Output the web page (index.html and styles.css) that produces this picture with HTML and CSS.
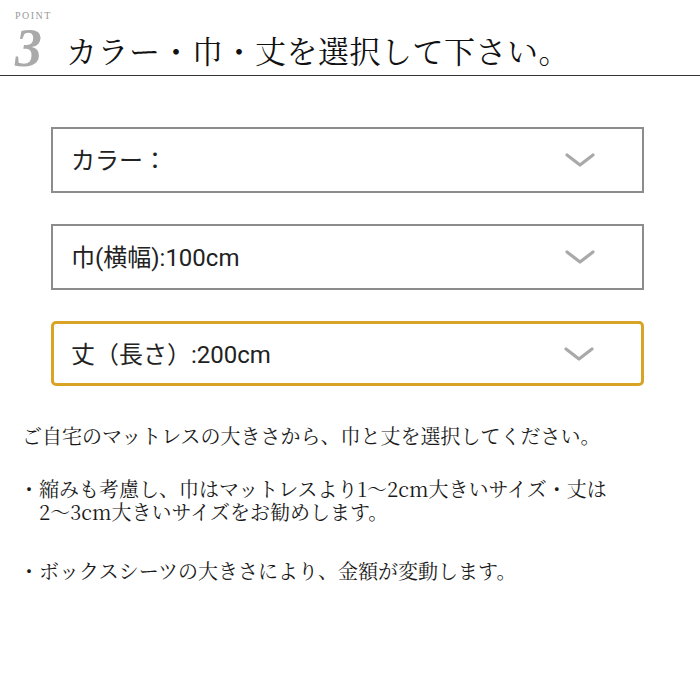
FILE: index.html
```html
<!DOCTYPE html>
<html lang="ja">
<head>
    <meta charset="UTF-8">
    <meta name="viewport" content="width=device-width, initial-scale=1.0">
    <title>カラー・巾・丈の選択</title>
    <link rel="stylesheet" href="styles.css">
</head>
<body>
    <div class="point-head">
        <div class="point-mark">
            <span class="point-label">POINT</span>
            <span class="point-num">3</span>
        </div>
        <h1 class="point-title">カラー・巾・丈を選択して下さい。</h1>
    </div>

    <div class="select-list">
        <div class="select-box">
            <span class="select-text">カラー：</span>
            <svg class="chevron" width="30" height="16" viewBox="0 0 30 16"><path d="M2 3 L15 13 L28 3" fill="none" stroke="#a9a9a9" stroke-width="3.2" stroke-linecap="round" stroke-linejoin="round"/></svg>
        </div>
        <div class="select-box">
            <span class="select-text">巾(横幅):100cm</span>
            <svg class="chevron" width="30" height="16" viewBox="0 0 30 16"><path d="M2 3 L15 13 L28 3" fill="none" stroke="#a9a9a9" stroke-width="3.2" stroke-linecap="round" stroke-linejoin="round"/></svg>
        </div>
        <div class="select-box active">
            <span class="select-text">丈（長さ）:200cm</span>
            <svg class="chevron" width="30" height="16" viewBox="0 0 30 16"><path d="M2 3 L15 13 L28 3" fill="none" stroke="#a9a9a9" stroke-width="3.2" stroke-linecap="round" stroke-linejoin="round"/></svg>
        </div>
    </div>

    <div class="notes">
        <p class="lead">ご自宅のマットレスの大きさから、巾と丈を選択してください。</p>
        <p class="note">・<span>縮みも考慮し、巾はマットレスより1～2cm大きいサイズ・丈は<br>2～3cm大きいサイズをお勧めします。</span></p>
        <p class="note">・<span>ボックスシーツの大きさにより、金額が変動します。</span></p>
    </div>
</body>
</html>
```

FILE: styles.css
```css
body {
    margin: 0;
    background: #fff;
    color: #222;
    font-family: "Noto Serif CJK JP", "Liberation Serif", "Noto Sans CJK JP", serif;
}
.point-head {
    display: flex;
    align-items: flex-end;
    padding: 10px 0 4px 15px;
    border-bottom: 1px solid #333;
}
.point-mark {
    display: flex;
    flex-direction: column;
    width: 50px;
}
.point-label {
    font-family: "Liberation Serif", serif;
    font-size: 10px;
    letter-spacing: 1.5px;
    color: #999;
    line-height: 11px;
    margin-bottom: 4px;
}
.point-num {
    font-family: "Liberation Serif", serif;
    font-style: italic;
    font-weight: bold;
    font-size: 54px;
    line-height: 46px;
    color: #aaa;
}
.point-title {
    margin: 0 0 1px 1px;
    font-size: 31px;
    font-weight: normal;
    line-height: 40px;
    color: #111;
    letter-spacing: 0.5px;
}
.select-list {
    display: flex;
    flex-direction: column;
    gap: 31px;
    margin: 51px 0 0 51px;
    width: 593px;
}
.select-box {
    display: flex;
    align-items: center;
    justify-content: space-between;
    height: 62px;
    padding: 0 47px 0 18px;
    border: 2px solid #8c8c8c;
    font-family: Roboto, "Noto Sans CJK JP", sans-serif;
    font-size: 24px;
    color: #222;
}
.select-text {
    margin-top: -3px;
}
.select-box.active {
    height: 59px;
    padding-left: 17px;
    border: 3px solid #d9a326;
    border-radius: 5px;
}
.chevron {
    display: block;
}
.notes {
    margin: 38px 0 0 22px;
    font-size: 20px;
    color: #1a1a1a;
}
.notes p {
    margin: 0;
    line-height: 23px;
}
.lead {
    margin-bottom: 30px !important;
}
.note {
    display: flex;
    margin-left: -3px !important;
    margin-bottom: 36px !important;
}
.note span {
    display: block;
}
```
